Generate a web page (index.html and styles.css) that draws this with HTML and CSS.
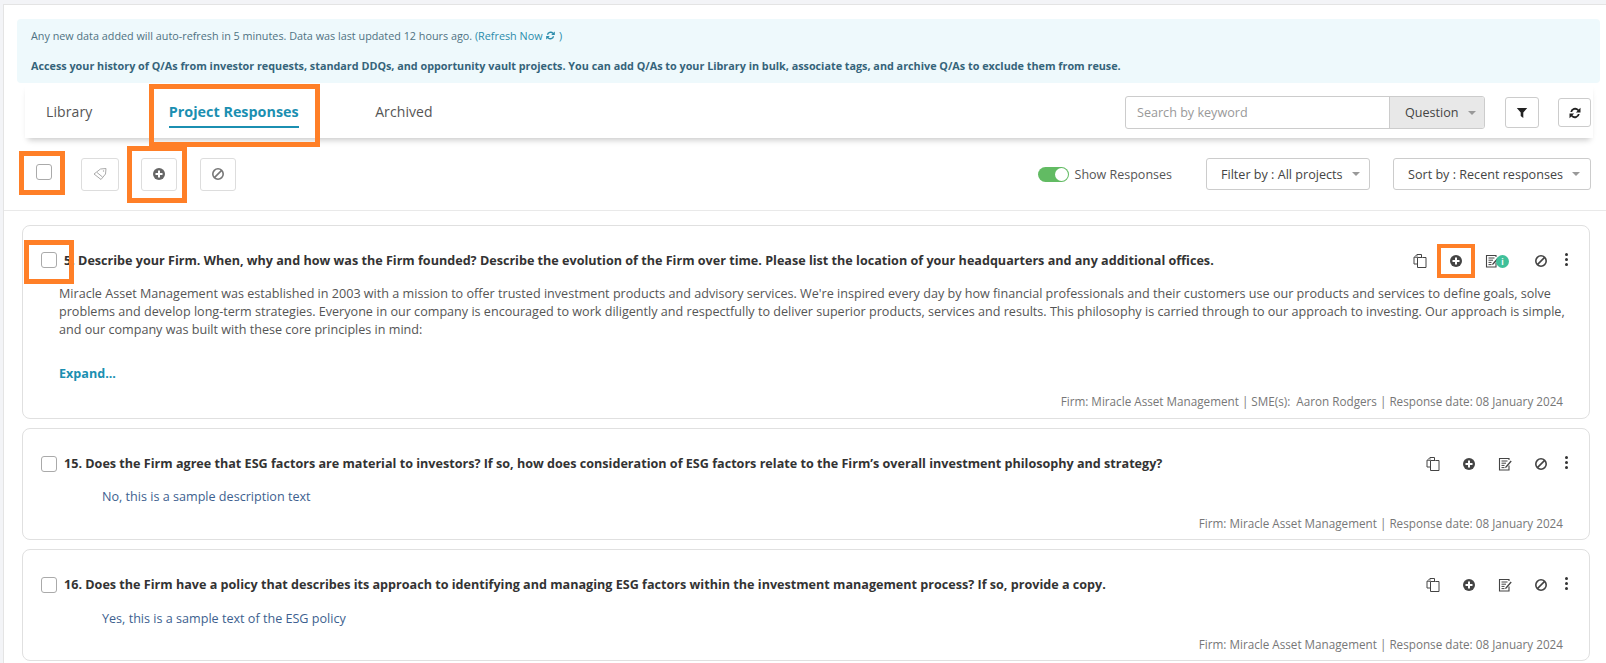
FILE: index.html
```html
<!DOCTYPE html>
<html lang="en">
<head>
<meta charset="utf-8">
<title>Library</title>
<link rel="stylesheet" href="styles.css">
</head>
<body>
<svg class="defs" width="0" height="0" aria-hidden="true">
  <symbol id="i-plus" viewBox="0 0 14 14"><circle cx="7" cy="7" r="6" fill="currentColor"/><path d="M7 3.500v7M3.500 7h7" stroke="#fff" stroke-width="2"/></symbol>
  <symbol id="i-ban" viewBox="0 0 14 14"><circle cx="7" cy="7" r="5.200" fill="none" stroke="currentColor" stroke-width="1.600"/><path d="M3.400 10.600l7.200-7.200" stroke="currentColor" stroke-width="1.600"/></symbol>
  <symbol id="i-copy" viewBox="0 0 14 14"><path d="M8.500 3.500V.5H4L1 3.500v6.500h3.500" fill="none" stroke="currentColor" stroke-width="1"/><path d="M4.500 3.500h5v0h3.500v10H4.500z" fill="#fff" stroke="currentColor" stroke-width="1"/><path d="M1 3.500h3V.5" fill="none" stroke="currentColor" stroke-width=".7"/></symbol>
  <symbol id="i-edit" viewBox="0 0 14 14"><path d="M11 8.500v4.500H1.500V1.500H11v1.500" fill="none" stroke="currentColor" stroke-width="1.100"/><path d="M3.500 4h6M3.500 6.200h4.500M3.500 8.400h3M3.500 10.600h3" stroke="currentColor" stroke-width="1"/><path d="M7.500 9.500l5.200-6 1 1-5.200 6-1.500.5z" fill="currentColor"/></symbol>
  <symbol id="i-tag" viewBox="0 0 14 14"><path d="M1 7L7.500 2 13 1.500 12.500 7 8 12.500z" fill="none" stroke="currentColor" stroke-width="1"/><path d="M4 5.500l5.500 4.500" fill="none" stroke="currentColor" stroke-width="1"/><circle cx="10.500" cy="4" r=".7" fill="currentColor"/></symbol>
  <symbol id="i-filter" viewBox="0 0 12 12"><path d="M.8 1h10.400L7.300 5.600V11L4.700 9V5.600z" fill="currentColor"/></symbol>
  <symbol id="i-sync" viewBox="0 0 14 14"><path d="M2.300 6A4.900 4.900 0 0 1 10.700 3.400L12.500 1.800V6.500H7.900l1.700-1.700A3.200 3.200 0 0 0 4.100 6z" fill="currentColor"/><path d="M11.700 8A4.900 4.900 0 0 1 3.300 10.600L1.500 12.200V7.500H6.100L4.400 9.200A3.200 3.200 0 0 0 9.900 8z" fill="currentColor"/></symbol>
</svg>
<main class="panel">
  <section class="alert">
    <p class="alert-line">Any new data added will auto-refresh in 5 minutes. Data was last updated 12 hours ago. <span class="link">(Refresh Now <svg class="sync-small"><use href="#i-sync"/></svg> )</span></p>
    <p class="alert-strong">Access your history of Q/As from investor requests, standard DDQs, and opportunity vault projects. You can add Q/As to your Library in bulk, associate tags, and archive Q/As to exclude them from reuse.</p>
  </section>
  <nav class="tabbar">
    <a class="tab">Library</a>
    <a class="tab tab-active">Project Responses<i class="mark mark-tab"></i></a>
    <a class="tab">Archived</a>
    <div class="search">
      <span class="search-input">Search by keyword</span>
      <span class="search-scope">Question<i class="caret"></i></span>
    </div>
    <button class="icon-btn btn-filter"><svg class="ic12"><use href="#i-filter"/></svg></button>
    <button class="icon-btn btn-refresh"><svg class="ic14"><use href="#i-sync"/></svg></button>
  </nav>
  <div class="toolbar">
    <span class="check check-top"><i class="mark mark-check-top"></i></span>
    <button class="tool tool-tag"><svg class="ic14"><use href="#i-tag"/></svg></button>
    <button class="tool tool-plus"><svg class="ic14"><use href="#i-plus"/></svg><i class="mark mark-plus-top"></i></button>
    <button class="tool tool-ban"><svg class="ic14"><use href="#i-ban"/></svg></button>
    <span class="toggle"><i class="knob"></i></span>
    <span class="toggle-label">Show Responses</span>
    <button class="select select-filter">Filter by : All projects<i class="caret"></i></button>
    <button class="select select-sort">Sort by : Recent responses<i class="caret"></i></button>
  </div>
  <div class="cards">
    <article class="card card-long">
      <header class="card-head">
        <span class="check"><i class="mark mark-check-card"></i></span>
        <h3 class="question">5. Describe your Firm. When, why and how was the Firm founded? Describe the evolution of the Firm over time. Please list the location of your headquarters and any additional offices.</h3>
        <div class="actions">
          <svg class="act"><use href="#i-copy"/></svg>
          <span class="act-wrap"><svg class="act"><use href="#i-plus"/></svg><i class="mark mark-plus-card"></i></span>
          <span class="edit-wrap"><svg class="act"><use href="#i-edit"/></svg><b class="badge">i</b></span>
          <svg class="act"><use href="#i-ban"/></svg>
          <span class="dots"><i></i><i></i><i></i></span>
        </div>
      </header>
      <p class="answer">Miracle Asset Management was established in 2003 with a mission to offer trusted investment products and advisory services. We're inspired every day by how financial professionals and their customers use our products and services to define goals, solve problems and develop long-term strategies. Everyone in our company is encouraged to work diligently and respectfully to deliver superior products, services and results. This philosophy is carried through to our approach to investing. Our approach is simple, and our company was built with these core principles in mind:</p>
      <a class="expand">Expand...</a>
      <footer class="meta meta-long">Firm: Miracle Asset Management | SME(s):&nbsp; Aaron Rodgers | Response date: 08 January 2024</footer>
    </article>
    <article class="card">
      <header class="card-head">
        <span class="check"></span>
        <h3 class="question">15. Does the Firm agree that ESG factors are material to investors? If so, how does consideration of ESG factors relate to the Firm’s overall investment philosophy and strategy?</h3>
        <div class="actions">
          <svg class="act"><use href="#i-copy"/></svg>
          <svg class="act"><use href="#i-plus"/></svg>
          <svg class="act"><use href="#i-edit"/></svg>
          <svg class="act"><use href="#i-ban"/></svg>
          <span class="dots"><i></i><i></i><i></i></span>
        </div>
      </header>
      <p class="answer-short">No, this is a sample description text</p>
      <footer class="meta">Firm: Miracle Asset Management | Response date: 08 January 2024</footer>
    </article>
    <article class="card card-last">
      <header class="card-head">
        <span class="check"></span>
        <h3 class="question">16. Does the Firm have a policy that describes its approach to identifying and managing ESG factors within the investment management process? If so, provide a copy.</h3>
        <div class="actions">
          <svg class="act"><use href="#i-copy"/></svg>
          <svg class="act"><use href="#i-plus"/></svg>
          <svg class="act"><use href="#i-edit"/></svg>
          <svg class="act"><use href="#i-ban"/></svg>
          <span class="dots"><i></i><i></i><i></i></span>
        </div>
      </header>
      <p class="answer-short">Yes, this is a sample text of the ESG policy</p>
      <footer class="meta">Firm: Miracle Asset Management | Response date: 08 January 2024</footer>
    </article>
  </div>
</main>
</body>
</html>
```

FILE: styles.css
```css
* { box-sizing: border-box; }
html, body { height: 100%; overflow: hidden; }
body {
  margin: 0;
  padding: 4px 0 0 3px;
  background: #f3f4f7;
  font-family: "Open Sans", sans-serif;
  font-size: 12.6px;
  color: #444;
}
.defs { position: absolute; }
p, h3 { margin: 0; }
button { font-family: inherit; background: #fff; padding: 0; cursor: pointer; }
svg { display: block; }
.ic12 { width: 12px; height: 12px; }
.ic14 { width: 14px; height: 14px; }

.panel { background: #fff; height: 660px; border-top: 1px solid #e4e4e4; border-left: 1px solid #e4e4e4; }

.alert {
  margin: 14px 6px 0 13px;
  height: 64px;
  padding: 9px 14px 0;
  background: #eef9fc;
  border-radius: 4px;
  font-size: 10.8px;
  line-height: 16px;
  color: #4f7282;
}
.link { color: #2b8cab; }
.sync-small { display: inline-block; width: 11px; height: 11px; vertical-align: -1px; }
.alert-strong { margin-top: 14px; font-weight: 700; color: #35647a; }

.tabbar {
  display: flex;
  align-items: center;
  height: 55px;
  margin-left: 21px;
  margin-right: 13px;
  padding: 4px 2px 0 21px;
  gap: 76.5px;
  box-shadow: 0 5px 6px -3px rgba(0, 0, 0, .22);
}
.tab { position: relative; margin-top: 4px; padding-bottom: 5px; border-bottom: 2px solid transparent; font-size: 14px; line-height: 19px; color: #555; letter-spacing: .1px; }
.tab-active { font-size: 14.35px; font-weight: 700; color: #1b8fb1; border-bottom-color: #1b8fb1; letter-spacing: 0; }
.search { margin-left: auto; display: flex; height: 33px; border: 1px solid #ccc; border-radius: 3px; overflow: hidden; }
.search-input { width: 263px; padding-left: 11px; line-height: 31px; font-size: 12.6px; color: #999; }
.search-scope { width: 95px; display: flex; align-items: center; padding-left: 15px; background: #e8e8e8; border-left: 1px solid #ccc; font-size: 12.6px; color: #444; }
.caret { width: 0; height: 0; margin-left: 9px; border: 4px solid transparent; border-top-color: #999; border-bottom: 0; }
.icon-btn { display: flex; align-items: center; justify-content: center; border: 1px solid #ccc; border-radius: 3px; color: #222; }
.btn-filter { width: 34px; height: 31px; margin-left: -56.5px; }
.btn-refresh { width: 33px; height: 29px; margin-left: -57.5px; }

.toolbar {
  display: flex;
  align-items: center;
  height: 73px;
  padding: 0 15px 0 32px;
  border-bottom: 1px solid #e9e9e9;
}
.check { position: relative; display: block; flex: none; width: 16px; height: 16px; background: #fff; border: 1px solid #aaa; border-radius: 3px; }
.check-top { margin-bottom: 4px; }
.tool { position: relative; display: flex; align-items: center; justify-content: center; height: 33px; border: 1px solid #ddd; border-radius: 3px; color: #777; }
.tool-tag { width: 38px; margin-left: 29px; color: #aaa; }
.tool-plus { width: 36px; margin-left: 22px; color: #666; }
.tool-ban { width: 36px; margin-left: 23px; color: #777; }
.toggle { position: relative; width: 31px; height: 15px; margin-left: auto; background: #62bb63; border-radius: 8px; }
.knob { position: absolute; top: 1px; right: 1px; width: 13px; height: 13px; background: #fff; border-radius: 50%; }
.toggle-label { margin-left: 6px; font-size: 12.5px; color: #555; }
.select { display: flex; align-items: center; justify-content: space-between; height: 32px; padding: 0 10px 0 14px; border: 1px solid #ccc; border-radius: 3px; font-size: 12.6px; color: #444; white-space: nowrap; }
.select-filter { width: 164px; margin-left: 34px; }
.select-sort { width: 198px; margin-left: 23px; }

.cards { padding: 14px 16px 0 18px; }
.card { height: 112px; margin-bottom: 9px; padding: 27px 26px 8px 18px; background: #fff; border: 1px solid #e0e0e0; border-radius: 8px; }
.card-long { height: 194px; }
.card-long .check { margin-top: -2px; }
.card-head { display: flex; align-items: center; height: 16px; }
.question { margin: -2px 0 0 7px; flex: 1; font-size: 12.6px; font-weight: 700; color: #333; white-space: nowrap; }
.actions { display: flex; align-items: center; gap: 22px; margin-right: -5px; color: #444; }
.act { width: 14px; height: 14px; }
.act-wrap { position: relative; display: block; }
.edit-wrap { position: relative; display: block; width: 27px; }
.badge { position: absolute; left: 11px; top: 1px; width: 13px; height: 13px; background: #3fc09a; border-radius: 50%; font: 700 8px/13px "Open Sans", sans-serif; color: #fff; text-align: center; }
.dots { display: flex; flex-direction: column; gap: 2px; margin-left: -5px; margin-top: -3px; width: 3px; }
.dots i { display: block; width: 3px; height: 3px; background: #333; border-radius: 50%; }

.answer { margin: 16px -14px 0 18px; line-height: 18px; color: #555; }
.expand { display: block; margin: 26px 0 0 18px; font-weight: 700; line-height: 18px; color: #1b8fb1; }
.answer-short { margin: 16px 0 0 61px; line-height: 18px; color: #3d5f8f; }
.card-last .answer-short { margin-top: 17px; }
.meta { margin-top: 8px; line-height: 18px; font-size: 11.7px; color: #777; text-align: right; }
.card-last .meta { margin-top: 7px; }
.meta-long { margin-top: 9px; }

.mark { position: absolute; border: 5px solid #ff7f27; pointer-events: none; }
.mark-tab { left: -20px; top: -18px; width: 171px; height: 63px; }
.mark-check-top { left: -18px; top: -14px; width: 46px; height: 44px; }
.mark-plus-top { left: -15px; top: -13px; width: 60px; height: 57px; }
.mark-check-card { left: -18px; top: -13px; width: 50px; height: 44px; }
.mark-plus-card { left: -12px; top: -10px; width: 38px; height: 34px; border-width: 4px; }
```
